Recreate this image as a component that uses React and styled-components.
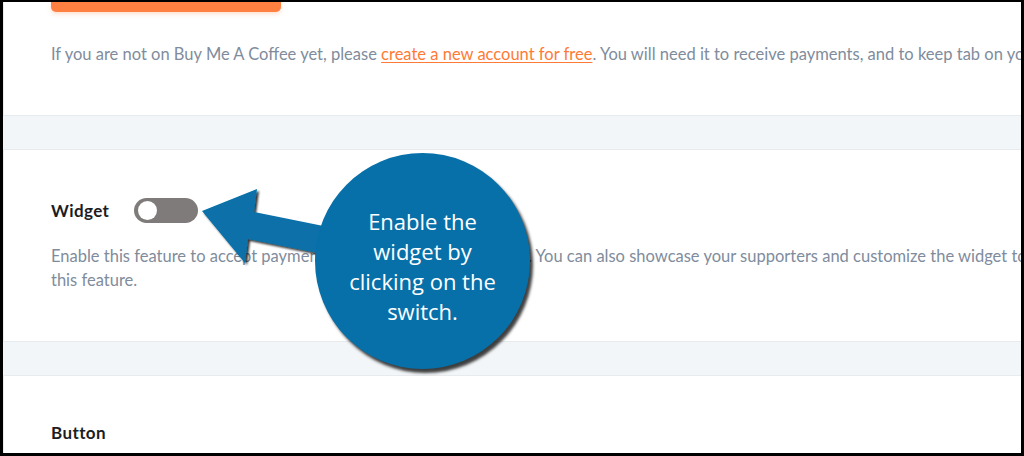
import React from "react";
import styled, { createGlobalStyle } from "styled-components";

const Global = createGlobalStyle`
  html, body { margin: 0; padding: 0; }
  body { font-family: "Lato", "Noto Sans", sans-serif; }
  * { box-sizing: border-box; }
`;

const Frame = styled.div`
  position: relative;
  width: 1024px;
  height: 456px;
  border-style: solid;
  border-color: #000;
  border-width: 2px 3px 3px 3px;
  overflow: hidden;
  background: #f3f6f8;
`;

const Stack = styled.div`
  display: flex;
  flex-direction: column;
  gap: 33px;
  width: 1160px;
`;

const Card = styled.section`
  background: #fff;
  border: 1px solid #e7ebee;
  border-top: ${(p) => (p.$open ? "none" : "1px solid #e7ebee")};
  padding: ${(p) => p.$pad};
`;

const OrangeButton = styled.div`
  width: 230px;
  height: 10px;
  background: #ff8040;
  border-radius: 0 0 5px 5px;
  box-shadow: 0 2px 4px rgba(255, 128, 64, 0.25);
`;

const Text = styled.p`
  margin: ${(p) => p.$mt || 0}px 0 0;
  font-size: 16.5px;
  line-height: 24px;
  color: #808c9c;
  white-space: nowrap;
`;

const Link = styled.a`
  color: #ff7a35;
  text-decoration: underline;
  text-underline-offset: 2px;
`;

const HeaderRow = styled.div`
  display: flex;
  align-items: center;
  gap: 25px;
  height: 25px;
`;

const Label = styled.h3`
  margin: 0;
  font-size: 17px;
  letter-spacing: 0.4px;
  line-height: 24px;
  font-weight: 700;
  color: #1d1d1f;
`;

const Toggle = styled.div`
  width: 64px;
  height: 25px;
  border-radius: 13px;
  background: #7f7b7b;
  display: flex;
  align-items: center;
  padding-left: 4px;
`;

const Knob = styled.span`
  width: 19px;
  height: 19px;
  border-radius: 50%;
  background: #fff;
`;

const Arrow = styled.svg`
  position: absolute;
  left: 0;
  top: 0;
  pointer-events: none;
`;

const Bubble = styled.div`
  position: absolute;
  left: 312px;
  top: 151px;
  width: 215px;
  height: 216px;
  border-radius: 50%;
  background: #0770a9;
  box-shadow: 3px 4px 3px rgba(0, 0, 0, 0.75);
  display: flex;
  flex-direction: column;
  align-items: center;
  justify-content: center;
  padding-top: 10px;
  font-family: "Open Sans", "Noto Sans", sans-serif;
  font-size: 22px;
  line-height: 30px;
  color: #fff;
  text-align: center;
`;

export default function App() {
  return (
    <>
      <Global />
      <Frame>
        <Stack>
          <Card $open $pad="0 0 49px 47px">
            <OrangeButton />
            <Text $mt={30}>
              If you are not on Buy Me A Coffee yet, please{" "}
              <Link>create a new account for free</Link>. You will need it to
              receive payments, and to keep tab on your supporters.
            </Text>
          </Card>
          <Card $pad="48px 0 49px 47px">
            <HeaderRow>
              <Label>Widget</Label>
              <Toggle>
                <Knob />
              </Toggle>
            </HeaderRow>
            <Text $mt={21}>
              Enable this feature to accept payments from folks on your website.
              You can also showcase your supporters and customize the widget to
              match your site.
              <br />
              this feature.
            </Text>
          </Card>
          <Card $pad="45px 0 40px 47px">
            <Label>Button</Label>
          </Card>
        </Stack>
        <Arrow width="1024" height="456" viewBox="0 0 1024 456">
          <defs>
            <filter id="sh" x="-20%" y="-20%" width="140%" height="140%">
              <feDropShadow dx="2" dy="2" stdDeviation="1" floodColor="#000" floodOpacity="0.8" />
            </filter>
          </defs>
          <path
            d="M199 209 L254 187 L251 210 L340 228 L340 256 L245 237 L242 261 Z"
            fill="#0770a9"
            filter="url(#sh)"
          />
        </Arrow>
        <Bubble>
          <span>Enable the</span>
          <span>widget by</span>
          <span>clicking on the</span>
          <span>switch.</span>
        </Bubble>
      </Frame>
    </>
  );
}
